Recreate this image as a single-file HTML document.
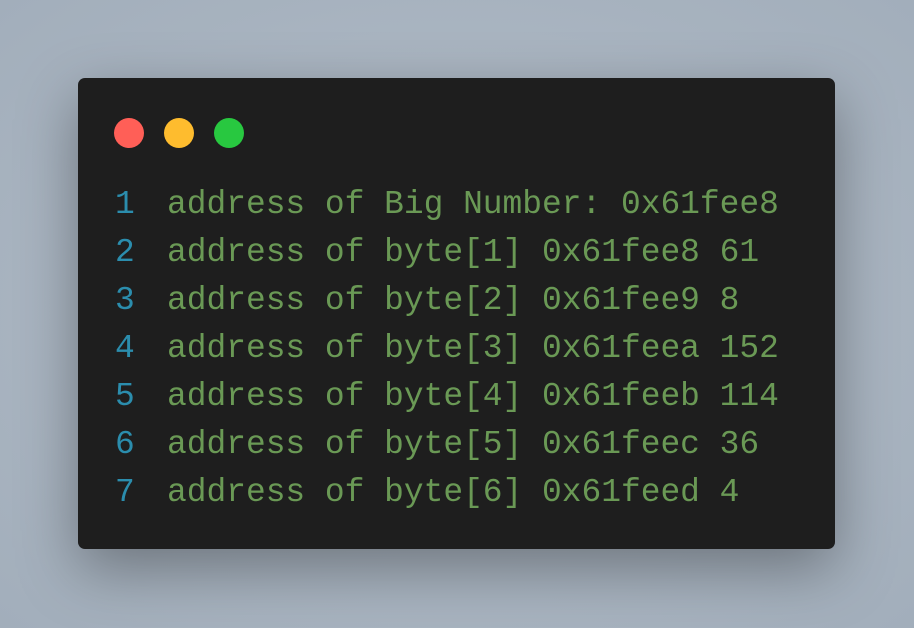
<!DOCTYPE html>
<html><head><style>
html,body{margin:0;width:914px;height:628px;overflow:hidden}
body{background:radial-gradient(ellipse at center,#b4bec9 0%,#a2aebb 100%);position:relative}
.win{position:absolute;left:78px;top:78px;width:757px;height:471px;background:#1e1e1e;border-radius:7px;box-shadow:0 20px 60px rgba(0,0,0,0.35)}
.dot{position:absolute;top:40px;width:30px;height:30px;border-radius:50%}
.code{position:absolute;left:0;top:103px;font-family:"Liberation Mono",monospace;font-size:32.9px;line-height:48px;white-space:pre;color:#6a9955}
.ln{display:inline-block;width:89px;padding-left:37px;box-sizing:border-box;color:#2b8dad}
</style></head><body>
<div class="win">
<div class="dot" style="left:36px;background:#ff5f57"></div>
<div class="dot" style="left:86px;background:#febc2e"></div>
<div class="dot" style="left:136px;background:#28c840"></div>
<div class="code"><div><span class="ln">1</span>address of Big Number: 0x61fee8</div><div><span class="ln">2</span>address of byte[1] 0x61fee8 61</div><div><span class="ln">3</span>address of byte[2] 0x61fee9 8</div><div><span class="ln">4</span>address of byte[3] 0x61feea 152</div><div><span class="ln">5</span>address of byte[4] 0x61feeb 114</div><div><span class="ln">6</span>address of byte[5] 0x61feec 36</div><div><span class="ln">7</span>address of byte[6] 0x61feed 4</div></div>
</div>
</body></html>
